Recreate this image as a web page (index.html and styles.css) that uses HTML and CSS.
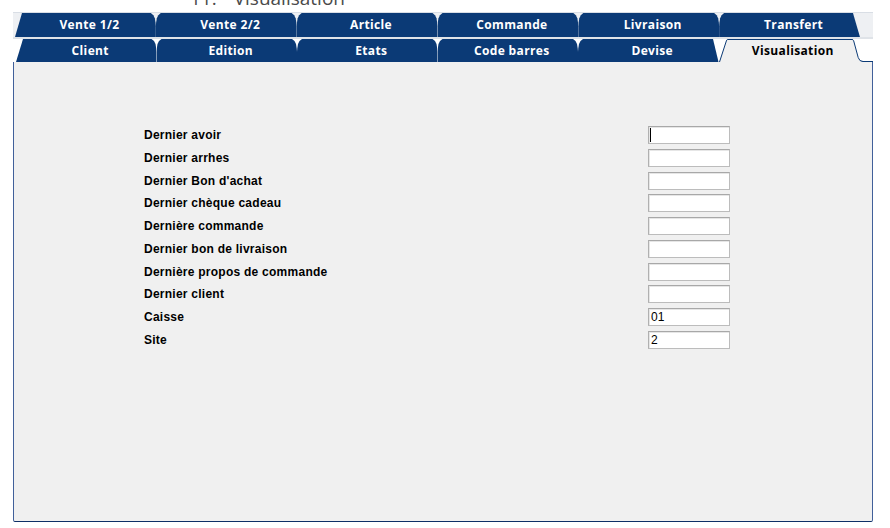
FILE: index.html
```html
<!DOCTYPE html>
<html lang="fr">
<head>
<meta charset="utf-8">
<title>Visualisation</title>
<link rel="stylesheet" href="styles.css">
</head>
<body>
<div class="title"><span class="num">11.</span><span>Visualisation</span></div>
<div class="tabs">
  <div class="row row1">
    <div class="tab first">Vente 1/2</div>
    <div class="tab">Vente 2/2</div>
    <div class="tab">Article</div>
    <div class="tab">Commande</div>
    <div class="tab">Livraison</div>
    <div class="tab last">Transfert</div>
  </div>
  <div class="row row2">
    <div class="tab first">Client</div>
    <div class="tab">Edition</div>
    <div class="tab">Etats</div>
    <div class="tab">Code barres</div>
    <div class="tab before-active">Devise</div>
    <div class="tab active">
      <svg class="active-shape" width="144" height="23" viewBox="0 0 144 23">
        <path class="fill" d="M0,23 L7.6,1.2 Q8,0.5 9,0.5 L133,0.5 Q134.2,0.5 134.6,1.6 L139.2,18.5 Q140.3,22.5 144,22.5 L144,23 Z"/>
        <path class="line" d="M0.5,23 L7.6,1.2 Q8,0.5 9,0.5 L133,0.5 Q134.2,0.5 134.6,1.6 L139.2,18.5 Q140.3,22.5 144,22.5"/>
      </svg>
      <span class="tab-label">Visualisation</span>
    </div>
    <div class="tab-end"></div>
  </div>
</div>
<div class="panel">
  <div class="form">
    <label class="lbl">Dernier avoir</label><input class="field caret" type="text" value="">
    <label class="lbl">Dernier arrhes</label><input class="field" type="text" value="">
    <label class="lbl">Dernier Bon d'achat</label><input class="field" type="text" value="">
    <label class="lbl">Dernier chèque cadeau</label><input class="field" type="text" value="">
    <label class="lbl">Dernière commande</label><input class="field" type="text" value="">
    <label class="lbl">Dernier bon de livraison</label><input class="field" type="text" value="">
    <label class="lbl">Dernière propos de commande</label><input class="field" type="text" value="">
    <label class="lbl">Dernier client</label><input class="field" type="text" value="">
    <label class="lbl">Caisse</label><input class="field" type="text" value="01">
    <label class="lbl">Site</label><input class="field" type="text" value="2">
  </div>
</div>
</body>
</html>
```
FILE: styles.css
```css
html, body {
  margin: 0;
  padding: 0;
  background: #ffffff;
}

body {
  font-family: "Liberation Sans", Arial, sans-serif;
  overflow: hidden;
}

.title {
  height: 24px;
  margin-top: -12px;
  padding-left: 190px;
  font-family: "Open Sans", "Liberation Sans", sans-serif;
  font-size: 19px;
  line-height: 20px;
  color: #4a4a4a;
  white-space: nowrap;
}

.title .num {
  margin-right: 17px;
}

.tabs {
  margin-left: 13px;
  width: 860px;
  border-top: 1px solid #d9dee5;
}

.row {
  display: flex;
  box-sizing: border-box;
}

.row1 {
  height: 26px;
  padding-left: 2px;
  background: #eef0f3;
  border-bottom: 2px solid #dfe3e8;
}

.row2 {
  height: 23px;
  padding-left: 3px;
  background: #ffffff;
}

.tab {
  --left: 0 100%, 0 55%, 0.3px 40%, 1px 22%, 2.5px 9%, 5px 0;
  --right: calc(100% - 5px) 0, calc(100% - 2.5px) 9%, calc(100% - 1px) 22%, calc(100% - 0.3px) 40%, 100% 55%, 100% 100%;
  flex: 0 0 auto;
  box-sizing: border-box;
  position: relative;
  padding-left: 8px;
  background: #0b3a76;
  color: #ffffff;
  font-family: "Open Sans", "Liberation Sans", sans-serif;
  font-weight: 700;
  font-size: 12px;
  letter-spacing: 0.35px;
  text-align: center;
  white-space: nowrap;
  clip-path: polygon(var(--left), var(--right));
}

.row1 .tab {
  width: 140.83px;
  line-height: 24px;
}

.row2 .tab {
  width: 140.5px;
  line-height: 23px;
}

.tab.first {
  --left: 0 100%, 7px 0;
}

.tab.last {
  --right: calc(100% - 7px) 0, 100% 100%;
}

.tab.before-active {
  --right: calc(100% - 5.5px) 0, 100% 100%;
}

.tab.active {
  background: transparent;
  color: #000000;
  clip-path: none;
  overflow: visible;
  z-index: 1;
}

.active-shape {
  position: absolute;
  left: 0;
  top: 0;
  overflow: visible;
}

.active-shape .fill {
  fill: #f0f0f0;
  stroke: none;
}

.active-shape .line {
  fill: none;
  stroke: #0b3a76;
  stroke-width: 1;
}

.tab-label {
  position: relative;
}

.tab-end {
  flex: 1 1 auto;
  box-sizing: border-box;
  border-bottom: 1px solid #0b3a76;
}

.panel {
  margin-left: 13px;
  width: 860px;
  height: 460px;
  box-sizing: border-box;
  background: #f0f0f0;
  border: 1px solid #41609a;
  border-top: none;
  border-bottom-color: #0e2f66;
  border-radius: 0 0 2px 2px;
}

.form {
  display: grid;
  grid-template-columns: 504px 82px;
  grid-auto-rows: 18px;
  row-gap: 4.75px;
  align-items: center;
  padding: 64px 0 0 130px;
}

.lbl {
  font-family: "Liberation Sans", Arial, sans-serif;
  font-weight: 700;
  font-size: 12px;
  letter-spacing: 0.25px;
  line-height: 18px;
  color: #000000;
  white-space: nowrap;
}

.field {
  box-sizing: border-box;
  width: 82px;
  height: 18px;
  margin: 0;
  padding: 0 0 0 2px;
  border: 1px solid #bcbcbc;
  border-top-color: #a8a8a8;
  border-left-color: #b0b0b0;
  border-radius: 0;
  background: #ffffff;
  box-shadow: inset 1px 1px 0 #e6e6e6;
  font-family: "Liberation Sans", Arial, sans-serif;
  font-size: 12px;
  color: #000000;
  outline: none;
}

.field.caret {
  background: linear-gradient(#000000, #000000) no-repeat 1px 1px / 1px 14px, #ffffff;
}
```
